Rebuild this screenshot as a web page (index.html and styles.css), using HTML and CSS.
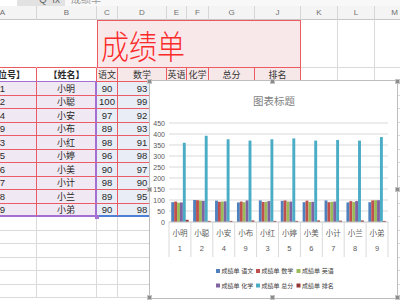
FILE: index.html
```html
<!DOCTYPE html>
<html lang="zh">
<head>
<meta charset="utf-8">
<link rel="stylesheet" href="styles.css">
</head>
<body>
<div class="app">
  <div class="fbar">
    <div class="fb-left"></div>
    <div class="fb-tools"><span class="fb-txt">Q&nbsp;&nbsp;fx</span></div>
    <div class="fb-input"><span class="fb-txt">成绩单</span></div>
  </div>

  <div class="sheet">
    <!-- column letters -->
    <div class="c ch">A</div><div class="c ch">B</div><div class="c ch">C</div><div class="c ch">D</div><div class="c ch">E</div><div class="c ch">F</div><div class="c ch">G</div><div class="c ch">J</div><div class="c ch">K</div><div class="c ch">L</div><div class="c ch">M</div>

    <!-- title row -->
    <div class="c tw"></div><div class="c tw"></div>
    <div class="c title"><span class="title-txt">成绩单</span></div>
    <div class="c"></div><div class="c"></div><div class="c"></div>

    <!-- header row -->
    <div class="c hA">【座位号】</div><div class="c hB">【姓名】</div>
    <div class="c hp">语文</div><div class="c hp">数学</div><div class="c hp">英语</div><div class="c hp">化学</div><div class="c hp">总分</div><div class="c hp">排名</div>
    <div class="c"></div><div class="c"></div><div class="c"></div>

    <!-- data rows (columns E–J lie under the chart) -->
    <div class="c dA">1</div><div class="c dB">小明</div><div class="c dC">90</div><div class="c dD">93</div><div class="c"></div><div class="c"></div><div class="c"></div><div class="c"></div><div class="c"></div><div class="c"></div><div class="c"></div>
    <div class="c dA">2</div><div class="c dB">小聪</div><div class="c dC">100</div><div class="c dD">99</div><div class="c"></div><div class="c"></div><div class="c"></div><div class="c"></div><div class="c"></div><div class="c"></div><div class="c"></div>
    <div class="c dA">4</div><div class="c dB">小安</div><div class="c dC">97</div><div class="c dD">92</div><div class="c"></div><div class="c"></div><div class="c"></div><div class="c"></div><div class="c"></div><div class="c"></div><div class="c"></div>
    <div class="c dA">9</div><div class="c dB">小布</div><div class="c dC">89</div><div class="c dD">93</div><div class="c"></div><div class="c"></div><div class="c"></div><div class="c"></div><div class="c"></div><div class="c"></div><div class="c"></div>
    <div class="c dA">3</div><div class="c dB">小红</div><div class="c dC">98</div><div class="c dD">91</div><div class="c"></div><div class="c"></div><div class="c"></div><div class="c"></div><div class="c"></div><div class="c"></div><div class="c"></div>
    <div class="c dA">5</div><div class="c dB">小婷</div><div class="c dC">96</div><div class="c dD">98</div><div class="c"></div><div class="c"></div><div class="c"></div><div class="c"></div><div class="c"></div><div class="c"></div><div class="c"></div>
    <div class="c dA">6</div><div class="c dB">小美</div><div class="c dC">90</div><div class="c dD">97</div><div class="c"></div><div class="c"></div><div class="c"></div><div class="c"></div><div class="c"></div><div class="c"></div><div class="c"></div>
    <div class="c dA">7</div><div class="c dB">小计</div><div class="c dC">98</div><div class="c dD">90</div><div class="c"></div><div class="c"></div><div class="c"></div><div class="c"></div><div class="c"></div><div class="c"></div><div class="c"></div>
    <div class="c dA">8</div><div class="c dB">小兰</div><div class="c dC">89</div><div class="c dD">95</div><div class="c"></div><div class="c"></div><div class="c"></div><div class="c"></div><div class="c"></div><div class="c"></div><div class="c"></div>
    <div class="c dA last">9</div><div class="c dB last">小弟</div><div class="c dC last">90</div><div class="c dD last">98</div><div class="c"></div><div class="c"></div><div class="c"></div><div class="c"></div><div class="c"></div><div class="c"></div><div class="c"></div>

    <!-- empty rows -->
    <div class="c"></div><div class="c"></div><div class="c"></div><div class="c"></div><div class="c"></div><div class="c"></div><div class="c"></div><div class="c"></div><div class="c"></div><div class="c"></div><div class="c"></div>
    <div class="c"></div><div class="c"></div><div class="c"></div><div class="c"></div><div class="c"></div><div class="c"></div><div class="c"></div><div class="c"></div><div class="c"></div><div class="c"></div><div class="c"></div>
    <div class="c"></div><div class="c"></div><div class="c"></div><div class="c"></div><div class="c"></div><div class="c"></div><div class="c"></div><div class="c"></div><div class="c"></div><div class="c"></div><div class="c"></div>
    <div class="c"></div><div class="c"></div><div class="c"></div><div class="c"></div><div class="c"></div><div class="c"></div><div class="c"></div><div class="c"></div><div class="c"></div><div class="c"></div><div class="c"></div>
    <div class="c"></div><div class="c"></div><div class="c"></div><div class="c"></div><div class="c"></div><div class="c"></div><div class="c"></div><div class="c"></div><div class="c"></div><div class="c"></div><div class="c"></div>
    <div class="c"></div><div class="c"></div><div class="c"></div><div class="c"></div><div class="c"></div><div class="c"></div><div class="c"></div><div class="c"></div><div class="c"></div><div class="c"></div><div class="c"></div>
  </div>

  <div class="fill-handle"></div>

  <div class="chart">
    <svg class="plot" width="247" height="217" viewBox="0 0 247 217">
      <text class="ct" x="124" y="24" text-anchor="middle">图表标题</text>
      <g class="grid">
        <line x1="19" x2="238" y1="130" y2="130"/>
        <line x1="19" x2="238" y1="119" y2="119"/>
        <line x1="19" x2="238" y1="108" y2="108"/>
        <line x1="19" x2="238" y1="97" y2="97"/>
        <line x1="19" x2="238" y1="86" y2="86"/>
        <line x1="19" x2="238" y1="75" y2="75"/>
        <line x1="19" x2="238" y1="64" y2="64"/>
        <line x1="19" x2="238" y1="53" y2="53"/>
        <line x1="19" x2="238" y1="42" y2="42"/>
      </g>
      <g class="yl" text-anchor="end">
        <text x="15" y="143.5">0</text>
        <text x="15" y="132.5">50</text>
        <text x="15" y="121.5">100</text>
        <text x="15" y="110.5">150</text>
        <text x="15" y="99.5">200</text>
        <text x="15" y="88.5">250</text>
        <text x="15" y="77.5">300</text>
        <text x="15" y="66.5">350</text>
        <text x="15" y="55.5">400</text>
        <text x="15" y="44.5">450</text>
      </g>
      <g transform="translate(0,141) scale(1,-0.22)">
        <g transform="translate(21.25,0)"><rect class="s1" x="0" width="2.9" height="90"/><rect class="s2" x="2.9" width="2.9" height="93"/><rect class="s3" x="5.8" width="2.9" height="88"/><rect class="s4" x="8.7" width="2.9" height="89"/><rect class="s5" x="11.6" width="2.9" height="360"/><rect class="s6" x="14.5" width="2.9" height="10"/></g>
        <g transform="translate(43.15,0)"><rect class="s1" x="0" width="2.9" height="100"/><rect class="s2" x="2.9" width="2.9" height="99"/><rect class="s3" x="5.8" width="2.9" height="97"/><rect class="s4" x="8.7" width="2.9" height="96"/><rect class="s5" x="11.6" width="2.9" height="392"/><rect class="s6" x="14.5" width="2.9" height="5"/></g>
        <g transform="translate(65.05,0)"><rect class="s1" x="0" width="2.9" height="97"/><rect class="s2" x="2.9" width="2.9" height="92"/><rect class="s3" x="5.8" width="2.9" height="93"/><rect class="s4" x="8.7" width="2.9" height="94"/><rect class="s5" x="11.6" width="2.9" height="376"/><rect class="s6" x="14.5" width="2.9" height="5"/></g>
        <g transform="translate(86.95,0)"><rect class="s1" x="0" width="2.9" height="89"/><rect class="s2" x="2.9" width="2.9" height="93"/><rect class="s3" x="5.8" width="2.9" height="90"/><rect class="s4" x="8.7" width="2.9" height="98"/><rect class="s5" x="11.6" width="2.9" height="370"/><rect class="s6" x="14.5" width="2.9" height="7"/></g>
        <g transform="translate(108.85,0)"><rect class="s1" x="0" width="2.9" height="98"/><rect class="s2" x="2.9" width="2.9" height="91"/><rect class="s3" x="5.8" width="2.9" height="92"/><rect class="s4" x="8.7" width="2.9" height="95"/><rect class="s5" x="11.6" width="2.9" height="376"/><rect class="s6" x="14.5" width="2.9" height="5"/></g>
        <g transform="translate(130.75,0)"><rect class="s1" x="0" width="2.9" height="96"/><rect class="s2" x="2.9" width="2.9" height="98"/><rect class="s3" x="5.8" width="2.9" height="93"/><rect class="s4" x="8.7" width="2.9" height="93"/><rect class="s5" x="11.6" width="2.9" height="380"/><rect class="s6" x="14.5" width="2.9" height="5"/></g>
        <g transform="translate(152.65,0)"><rect class="s1" x="0" width="2.9" height="90"/><rect class="s2" x="2.9" width="2.9" height="97"/><rect class="s3" x="5.8" width="2.9" height="91"/><rect class="s4" x="8.7" width="2.9" height="92"/><rect class="s5" x="11.6" width="2.9" height="370"/><rect class="s6" x="14.5" width="2.9" height="7"/></g>
        <g transform="translate(174.55,0)"><rect class="s1" x="0" width="2.9" height="98"/><rect class="s2" x="2.9" width="2.9" height="90"/><rect class="s3" x="5.8" width="2.9" height="92"/><rect class="s4" x="8.7" width="2.9" height="93"/><rect class="s5" x="11.6" width="2.9" height="373"/><rect class="s6" x="14.5" width="2.9" height="6"/></g>
        <g transform="translate(196.45,0)"><rect class="s1" x="0" width="2.9" height="89"/><rect class="s2" x="2.9" width="2.9" height="95"/><rect class="s3" x="5.8" width="2.9" height="91"/><rect class="s4" x="8.7" width="2.9" height="95"/><rect class="s5" x="11.6" width="2.9" height="370"/><rect class="s6" x="14.5" width="2.9" height="7"/></g>
        <g transform="translate(218.35,0)"><rect class="s1" x="0" width="2.9" height="90"/><rect class="s2" x="2.9" width="2.9" height="98"/><rect class="s3" x="5.8" width="2.9" height="99"/><rect class="s4" x="8.7" width="2.9" height="99"/><rect class="s5" x="11.6" width="2.9" height="386"/><rect class="s6" x="14.5" width="2.9" height="5"/></g>
      </g>
      <line class="axis" x1="19" x2="238" y1="141" y2="141"/>
      <g class="div">
        <line x1="19" x2="19" y1="141" y2="176"/>
        <line x1="40.9" x2="40.9" y1="141" y2="176"/>
        <line x1="62.8" x2="62.8" y1="141" y2="176"/>
        <line x1="84.7" x2="84.7" y1="141" y2="176"/>
        <line x1="106.6" x2="106.6" y1="141" y2="176"/>
        <line x1="128.5" x2="128.5" y1="141" y2="176"/>
        <line x1="150.4" x2="150.4" y1="141" y2="176"/>
        <line x1="172.3" x2="172.3" y1="141" y2="176"/>
        <line x1="194.2" x2="194.2" y1="141" y2="176"/>
        <line x1="216.1" x2="216.1" y1="141" y2="176"/>
        <line x1="238" x2="238" y1="141" y2="176"/>
      </g>
      <g class="xl" text-anchor="middle">
        <text x="29.95" y="155">小明</text><text x="51.85" y="155">小聪</text><text x="73.75" y="155">小安</text><text x="95.65" y="155">小布</text><text x="117.55" y="155">小红</text><text x="139.45" y="155">小婷</text><text x="161.35" y="155">小美</text><text x="183.25" y="155">小计</text><text x="205.15" y="155">小兰</text><text x="227.05" y="155">小弟</text>
        <text x="29.95" y="170">1</text><text x="51.85" y="170">2</text><text x="73.75" y="170">4</text><text x="95.65" y="170">9</text><text x="117.55" y="170">3</text><text x="139.45" y="170">5</text><text x="161.35" y="170">6</text><text x="183.25" y="170">7</text><text x="205.15" y="170">8</text><text x="227.05" y="170">9</text>
      </g>
      <g class="lg">
        <rect class="s1" x="66" y="188" width="4" height="4"/><text x="71.5" y="192.3">成绩单 语文</text>
        <rect class="s2" x="106" y="188" width="4" height="4"/><text x="111.5" y="192.3">成绩单 数学</text>
        <rect class="s3" x="146.5" y="188" width="4" height="4"/><text x="152" y="192.3">成绩单 英语</text>
        <rect class="s4" x="66" y="202.5" width="4" height="4"/><text x="71.5" y="206.8">成绩单 化学</text>
        <rect class="s5" x="106" y="202.5" width="4" height="4"/><text x="111.5" y="206.8">成绩单 总分</text>
        <rect class="s6" x="146.5" y="202.5" width="4" height="4"/><text x="152" y="206.8">成绩单 排名</text>
      </g>
    </svg>
    <span class="hdl h-tl"></span><span class="hdl h-tm"></span><span class="hdl h-tr"></span>
    <span class="hdl h-ml"></span><span class="hdl h-mr"></span>
    <span class="hdl h-bl"></span><span class="hdl h-bm"></span><span class="hdl h-br"></span>
  </div>
</div>
</body>
</html>
```

FILE: styles.css
```css
* { box-sizing: border-box; margin: 0; padding: 0; }
html, body { width: 400px; height: 300px; overflow: hidden; background: #fff; }
body { font-family: "Liberation Sans", "Noto Sans CJK SC", sans-serif; color: #2a2a2a; }

.app { position: relative; width: 400px; height: 300px; overflow: hidden; }

/* formula bar (cut off at the top) */
.fbar { display: flex; height: 6px; overflow: hidden; font-size: 10px; line-height: 12px; }
.fb-left { width: 17px; background: #fff; }
.fb-tools { width: 48px; background: #e2e2e2; display: flex; align-items: flex-end; padding-left: 22px; color: #666; }
.fb-input { flex: 1; background: #f8f8f8; display: flex; align-items: flex-end; padding-left: 6px; color: #9a9a9a; }
.fb-txt { display: block; height: 12px; flex: none; }

/* sheet grid */
.sheet {
  display: grid;
  grid-template-columns: 68px 60px 21px 49px 20px 22px 46px 46px 37px 37px 40px;
  grid-template-rows: 14px 48px 14px repeat(16, 13.5px);
  width: 446px;
  margin-left: -31px;
}
.c {
  display: flex; align-items: center; justify-content: center;
  border-right: 1px solid #dadada; border-bottom: 1px solid #dadada;
  font-size: 9.5px; line-height: 1; white-space: nowrap; overflow: hidden;
}

.ch { background: #f4f4f4; color: #707070; font-size: 8px; border-right-color: #d6d6d6; border-bottom-color: #c6c6c6; }

.tw { border-right-color: #fff; border-bottom-color: #ec5a62; }
.title {
  grid-column: span 6;
  background: #f8e8e9;
  border: 1px solid #ee5a61;
  justify-content: flex-start; align-items: center;
  padding: 1px 0 0 3px;
  overflow: visible;
}
.title-txt {
  display: inline-block;
  font-family: "Noto Sans CJK SC", sans-serif;
  font-weight: 300;
  font-size: 33px; line-height: 44px;
  color: #fb2a2a;
  transform: scaleX(0.85);
  transform-origin: left center;
}

.hA, .hB { font-weight: bold; font-family: "Noto Sans CJK SC", sans-serif; font-size: 9px; border-right-color: #ec5a62; border-bottom: 1px solid #a36fd3; }
.hp { background: #f6e7e8; border-right-color: #ec5a62; border-bottom-color: #ec5a62; font-family: "Noto Sans CJK SC", sans-serif; font-size: 9px; color: #333; }

.dA, .dB { background: #f0e9f3; border-bottom-color: #ea5d66; }
.dA { border-right-color: #ea5d66; }
.dB { border-right: 2px solid #a36fd3; font-family: "Noto Sans CJK SC", sans-serif; font-size: 9px; }
.dC, .dD { background: #e8edf6; border-right-color: #ea5d66; border-bottom-color: #ea5d66; }
.dA.last, .dB.last { border-bottom: 2px solid #a36fd3; }
.dC.last, .dD.last { border-bottom: 2px solid #4d7fd6; }

.fill-handle { position: absolute; left: 95px; top: 215px; width: 4px; height: 4px; background: #a36fd3; }

/* chart overlay */
.chart {
  position: absolute; left: 150px; top: 81px; width: 247px; height: 217px;
  background: #fff;
  box-shadow: 0 0 0 1px #bdbdbd;
}
.plot { display: block; }
.ct { font-size: 10.5px; fill: #7f7f7f; font-family: "Noto Sans CJK SC", sans-serif; }
.grid line { stroke: #d9d9d9; stroke-width: 1; }
.axis { stroke: #bfbfbf; stroke-width: 1; }
.div line { stroke: #d9d9d9; stroke-width: 1; }
.yl { font-size: 7px; fill: #595959; }
.xl { font-size: 7.5px; fill: #595959; }
.lg { font-size: 6px; fill: #404040; }
.s1 { fill: #4f81bd; } .s2 { fill: #c0504d; } .s3 { fill: #9bbb59; }
.s4 { fill: #8064a2; } .s5 { fill: #4bacc6; } .s6 { fill: #943634; }

.hdl { position: absolute; width: 5px; height: 5px; background: #8c8c8c; border: 1px solid #c4c4c4; }
.h-tl { left: -3px; top: -2px; } .h-tm { left: 120px; top: -2px; } .h-tr { left: 245px; top: -2px; }
.h-ml { left: -3px; top: 106px; } .h-mr { left: 245px; top: 106px; }
.h-bl { left: -3px; top: 214px; } .h-bm { left: 120px; top: 214px; } .h-br { left: 245px; top: 214px; }
```
